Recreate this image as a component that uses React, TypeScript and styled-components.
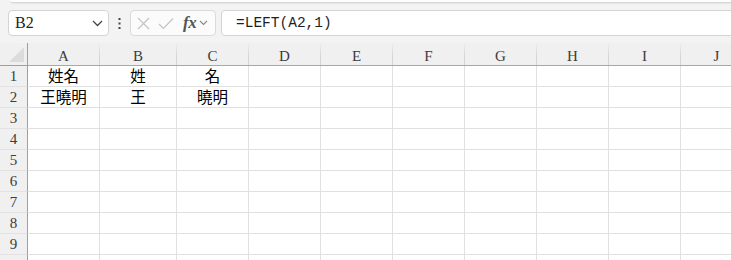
import styled, { createGlobalStyle } from 'styled-components';

const GlobalStyle = createGlobalStyle`
  body {
    margin: 0;
    overflow: hidden;
    background: #ffffff;
    font-family: 'Liberation Sans', 'Noto Sans CJK TC', sans-serif;
  }
`;

const Page = styled.div`
  width: 731px;
  height: 260px;
  overflow: hidden;
  display: flex;
  flex-direction: column;
`;

const Toolbar = styled.div`
  height: 43px;
  flex-shrink: 0;
  background: #f3f3f3;
  display: flex;
  flex-direction: column;
`;

const RibbonEdge = styled.div`
  height: 2px;
  margin-left: 10px;
  background: #fdfdfd;
  border-bottom: 1px solid #d6d6d6;
  border-bottom-left-radius: 4px;
  box-shadow: 0 1px 2px rgba(0, 0, 0, 0.06);
`;

const FormulaRow = styled.div`
  margin-top: 7px;
  height: 26px;
  display: flex;
  align-items: stretch;
  padding-left: 8px;
`;

const NameBox = styled.div`
  width: 101px;
  box-sizing: border-box;
  background: #fff;
  border: 1px solid #d4d4d4;
  border-radius: 4px;
  display: flex;
  align-items: center;
  justify-content: space-between;
  padding: 0 5px 0 6px;
  font-family: 'Liberation Serif', serif;
  font-size: 16px;
  color: #222;
`;

const Dots = styled.div`
  width: 21px;
  display: flex;
  align-items: center;
  justify-content: center;
`;

const IconBox = styled.div`
  width: 86px;
  box-sizing: border-box;
  background: #fbfbfb;
  border: 1px solid #dadada;
  border-radius: 4px;
  display: flex;
  align-items: center;
  padding-left: 6px;
  gap: 8px;
`;

const Fx = styled.span`
  font-family: 'Liberation Serif', serif;
  font-style: italic;
  font-weight: bold;
  font-size: 17px;
  color: #555;
  margin-left: 1px;
  letter-spacing: -0.5px;
`;

const FormulaInput = styled.div`
  flex: 1;
  margin-left: 5px;
  margin-right: -10px;
  background: #fff;
  border: 1px solid #d4d4d4;
  border-radius: 4px;
  display: flex;
  align-items: center;
  padding-left: 14px;
  font-family: 'Liberation Mono', monospace;
  font-size: 14.5px;
  color: #1f1f1f;
`;

const Grid = styled.div`
  flex-shrink: 0;
  display: grid;
  grid-template-columns: 28px 72px 77px 72px 72px 72px 72px 72px 72px 72px 72px;
  grid-template-rows: 23px;
  grid-auto-rows: 21px;
  background: #fff;
`;

const Corner = styled.div`
  background: #f0f0f0;
  border-right: 1px solid #9f9f9f;
  border-bottom: 1px solid #9f9f9f;
  box-sizing: border-box;
  display: flex;
  align-items: flex-end;
  justify-content: flex-end;
  padding: 0 3px 3px 0;
`;

const ColHeader = styled.div`
  background: #f0f0f0;
  border-right: 1px solid;
  border-bottom: 1px solid;
  border-image: linear-gradient(to bottom, #f0f0f0, #d4d4d4 60%) 1;
  box-sizing: border-box;
  display: flex;
  align-items: center;
  justify-content: center;
  padding-top: 5px;
  font-family: 'Liberation Serif', serif;
  font-size: 15px;
  color: #3c3c3c;
  position: relative;

  &::after {
    content: '';
    position: absolute;
    left: 0;
    right: -1px;
    bottom: -1px;
    height: 1px;
    background: #a8a8a8;
  }
`;

const RowHeader = styled.div`
  background: #f0f0f0;
  border-right: 1px solid #9f9f9f;
  border-bottom: 1px solid #e2e2e2;
  box-sizing: border-box;
  display: flex;
  align-items: center;
  justify-content: center;
  font-family: 'Liberation Serif', serif;
  font-size: 15px;
  color: #3c3c3c;
`;

const Cell = styled.div`
  border-right: 1px solid #e0e0e0;
  border-bottom: 1px solid #e0e0e0;
  box-sizing: border-box;
  display: flex;
  align-items: center;
  justify-content: center;
  font-family: 'Noto Sans CJK TC', 'Noto Sans CJK JP', sans-serif;
  font-size: 15.5px;
  color: #000;
  line-height: 1;
`;

const columns = ['A', 'B', 'C', 'D', 'E', 'F', 'G', 'H', 'I', 'J'];

const data: Record<number, string[]> = {
  1: ['姓名', '姓', '名'],
  2: ['王曉明', '王', '曉明'],
};

function App() {
  const rows = Array.from({ length: 10 }, (_, i) => i + 1);

  return (
    <Page>
      <GlobalStyle />
      <Toolbar>
        <RibbonEdge />
        <FormulaRow>
          <NameBox>
            <span>B2</span>
            <svg width="11" height="7" viewBox="0 0 11 7">
              <path d="M1 1 L5.5 5.5 L10 1" fill="none" stroke="#444" strokeWidth="1.3" />
            </svg>
          </NameBox>
          <Dots>
            <svg width="3" height="11" viewBox="0 0 3 11">
              <rect x="0.5" y="0" width="2" height="2" fill="#444" />
              <rect x="0.5" y="4.5" width="2" height="2" fill="#444" />
              <rect x="0.5" y="9" width="2" height="2" fill="#444" />
            </svg>
          </Dots>
          <IconBox>
            <svg width="13" height="13" viewBox="0 0 13 13">
              <path d="M1 1 L12 12 M12 1 L1 12" stroke="#c4c4c4" strokeWidth="1.2" fill="none" />
            </svg>
            <svg width="16" height="13" viewBox="0 0 16 13">
              <path d="M1 7 L5.5 11.5 L15 1.5" stroke="#c4c4c4" strokeWidth="1.2" fill="none" />
            </svg>
            <Fx>fx</Fx>
            <svg width="9" height="6" viewBox="0 0 9 6" style={{ marginLeft: -5 }}>
              <path d="M1 1 L4.5 4.5 L8 1" fill="none" stroke="#888" strokeWidth="1.1" />
            </svg>
          </IconBox>
          <FormulaInput>=LEFT(A2,1)</FormulaInput>
        </FormulaRow>
      </Toolbar>
      <Grid>
        <Corner>
          <svg width="15" height="15" viewBox="0 0 15 15">
            <path d="M15 0 L15 15 L0 15 Z" fill="#dcdcdc" />
          </svg>
        </Corner>
        {columns.map((c) => (
          <ColHeader key={c}>{c}</ColHeader>
        ))}
        {rows.map((r) => (
          <>
            <RowHeader key={`r${r}`}>{r < 10 ? r : ''}</RowHeader>
            {columns.map((c, ci) => (
              <Cell key={`${c}${r}`}>{data[r]?.[ci] ?? ''}</Cell>
            ))}
          </>
        ))}
      </Grid>
    </Page>
  );
}

export default App;
